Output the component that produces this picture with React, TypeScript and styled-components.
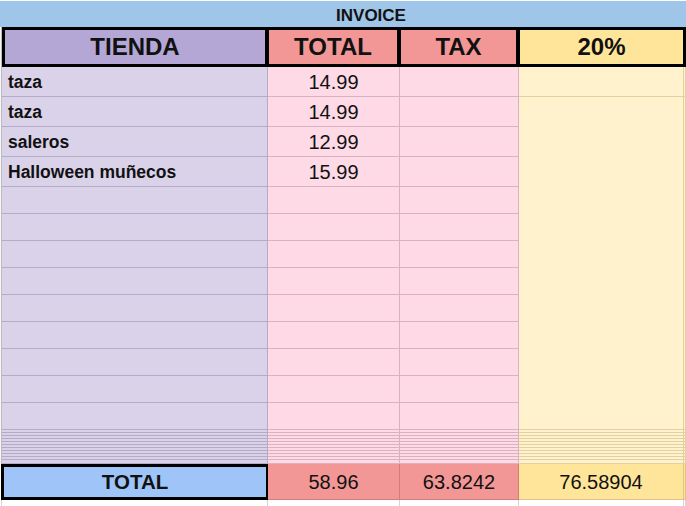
import React, { FunctionComponent } from 'react';
import styled, { createGlobalStyle } from 'styled-components';

const GlobalStyle = createGlobalStyle`
    * {
        box-sizing: border-box;
    }

    body {
        margin: 0;
        background: #ffffff;
        font-family: 'Liberation Sans', Arial, sans-serif;
        color: #111111;
    }
`;

const COLUMNS = '2px 266px 132px 119px 165px 2px';

interface IPalette {
    readonly bg: string;
    readonly line: string;
}

const PURPLE: IPalette = { bg: '#d9d2e9', line: '#b4abc6' };
const PINK: IPalette = { bg: '#fed9e6', line: '#d9b2c1' };
const YELLOW: IPalette = { bg: '#fff2cc', line: '#e0d0a2' };
const BLANK: IPalette = { bg: '#ffffff', line: '#d4d4d4' };

const StyledSheet = styled.div`
    width: 686px;
    height: 506px;
    overflow: hidden;
    background: #ffffff;
`;

interface IStyledRow {
    readonly $h: number;
}

const StyledRow = styled.div<IStyledRow>`
    display: grid;
    grid-template-columns: ${COLUMNS};
    height: ${({ $h }) => $h}px;
`;

const StyledTitle = styled.div`
    display: flex;
    align-items: center;
    justify-content: center;
    height: 26px;
    padding: 3px 0 0 56px;
    background: #9fc5e8;
    font-size: 17px;
    font-weight: 700;
`;

interface IStyledHeaderCell {
    readonly $bg: string;
    readonly $span?: number;
}

const StyledHeaderCell = styled.div<IStyledHeaderCell>`
    display: flex;
    align-items: center;
    justify-content: center;
    grid-column: span ${({ $span }) => $span || 1};
    background: ${({ $bg }) => $bg};
    border: 3px solid #000000;
    font-size: 24px;
    font-weight: 700;

    & + & {
        margin-left: -2px;
    }
`;

interface IStyledCell {
    readonly $bg: string;
    readonly $line: string;
    readonly $bottom?: boolean;
    readonly $left?: boolean;
    readonly $bold?: boolean;
    readonly $span?: number;
}

const StyledCell = styled.div<IStyledCell>`
    display: flex;
    align-items: center;
    justify-content: ${({ $left }) => ($left ? 'flex-start' : 'center')};
    grid-column: span ${({ $span }) => $span || 1};
    padding: 1px ${({ $left }) => ($left ? '6px' : '0')} 0;
    background: ${({ $bg }) => $bg};
    border-right: 1px solid ${({ $line }) => $line};
    border-bottom: ${({ $bottom, $line }) => ($bottom ? `1px solid ${$line}` : 'none')};
    font-size: ${({ $bold }) => ($bold ? '17.5px' : '20px')};
    font-weight: ${({ $bold }) => ($bold ? 700 : 400)};
    white-space: nowrap;
    overflow: hidden;
`;

const StyledGutter = styled.div`
    background: #f6f6f6;
    border-right: 1px solid #bcbcbc;
`;

const StyledTotalLabel = styled.div`
    display: flex;
    align-items: center;
    justify-content: center;
    grid-column: span 2;
    margin: 0 -1px 0 1px;
    background: #9fc5f8;
    border: 3px solid #000000;
    font-size: 20.5px;
    font-weight: 700;
`;

const items = [
    { name: 'taza', price: '14.99' },
    { name: 'taza', price: '14.99' },
    { name: 'saleros', price: '12.99' },
    { name: 'Halloween muñecos', price: '15.99' },
];

const EMPTY_ROWS = 9;
const THIN_ROWS = 11;

const App: FunctionComponent = () => {
    const rows: { h: number; name?: string; price?: string; lineYellow: boolean }[] = [];

    items.forEach((item, i) => {
        rows.push({ h: 30, name: item.name, price: item.price, lineYellow: i === 0 });
    });
    for (let i = 0; i < EMPTY_ROWS; i++) {
        rows.push({ h: 27, lineYellow: i === EMPTY_ROWS - 1 });
    }
    for (let i = 0; i < THIN_ROWS; i++) {
        rows.push({ h: i === THIN_ROWS - 1 ? 4 : 3, lineYellow: true });
    }

    return (
        <StyledSheet>
            <GlobalStyle />
            <StyledRow $h={1} />
            <StyledTitle>INVOICE</StyledTitle>
            <StyledRow $h={40}>
                <StyledGutter />
                <StyledHeaderCell $bg='#b4a7d6'>TIENDA</StyledHeaderCell>
                <StyledHeaderCell $bg='#f29796'>TOTAL</StyledHeaderCell>
                <StyledHeaderCell $bg='#f29796'>TAX</StyledHeaderCell>
                <StyledHeaderCell $bg='#ffe599' $span={2}>
                    20%
                </StyledHeaderCell>
            </StyledRow>
            {rows.map((row, i) => (
                <StyledRow key={i} $h={row.h}>
                    <StyledGutter />
                    <StyledCell $bg={PURPLE.bg} $line={PURPLE.line} $bottom $left $bold>
                        {row.name}
                    </StyledCell>
                    <StyledCell $bg={PINK.bg} $line={PINK.line} $bottom>
                        {row.price}
                    </StyledCell>
                    <StyledCell $bg={PINK.bg} $line={PINK.line} $bottom />
                    <StyledCell $bg={YELLOW.bg} $line={YELLOW.line} $bottom={row.lineYellow} />
                    <StyledCell $bg={YELLOW.bg} $line={YELLOW.line} $bottom={row.lineYellow} />
                </StyledRow>
            ))}
            <StyledRow $h={36}>
                <StyledTotalLabel>TOTAL</StyledTotalLabel>
                <StyledCell $bg='#f29796' $line='#d27d7d' $bottom>
                    58.96
                </StyledCell>
                <StyledCell $bg='#f29796' $line='#d27d7d' $bottom>
                    63.8242
                </StyledCell>
                <StyledCell $bg='#ffe599' $line='#dcc486' $bottom>
                    76.58904
                </StyledCell>
                <StyledCell $bg='#ffe599' $line='#dcc486' $bottom />
            </StyledRow>
            <StyledRow $h={6}>
                <StyledCell $bg={BLANK.bg} $line={BLANK.line} />
                <StyledCell $bg={BLANK.bg} $line={BLANK.line} />
                <StyledCell $bg={BLANK.bg} $line={BLANK.line} />
                <StyledCell $bg={BLANK.bg} $line={BLANK.line} />
                <StyledCell $bg={BLANK.bg} $line={BLANK.line} />
                <StyledCell $bg={BLANK.bg} $line={BLANK.line} />
            </StyledRow>
        </StyledSheet>
    );
};

export default App;
